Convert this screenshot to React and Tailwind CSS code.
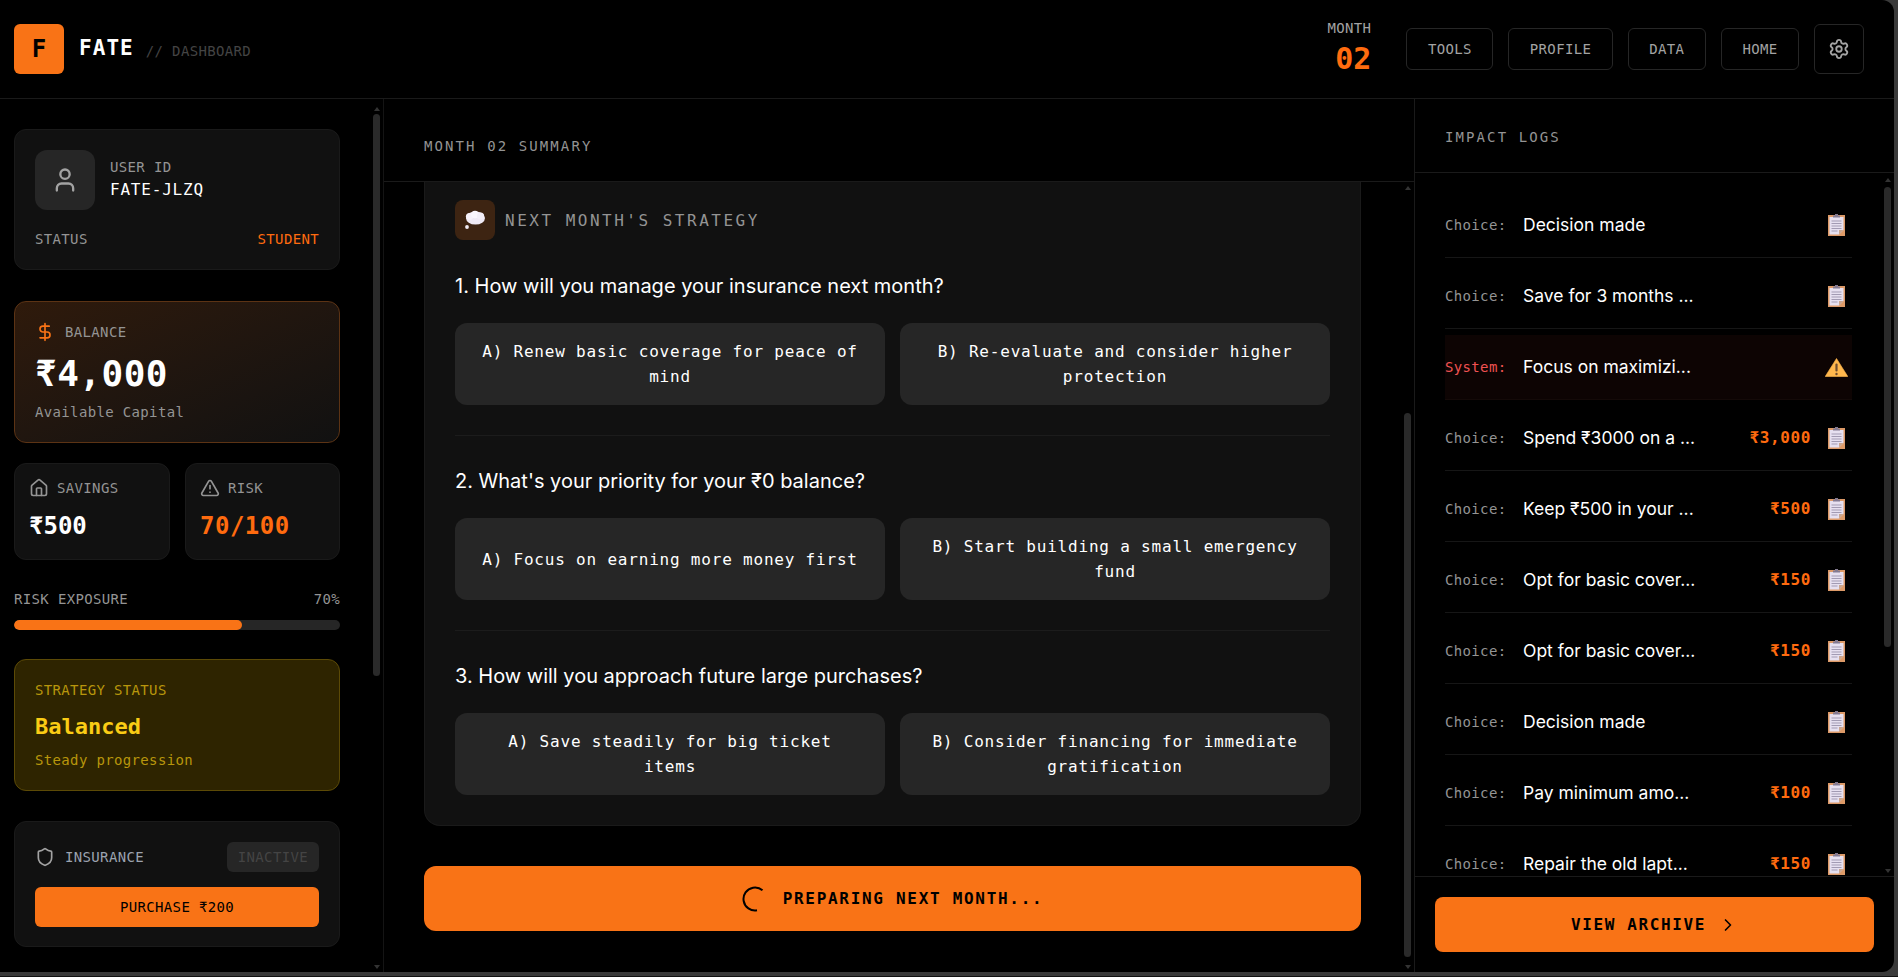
import React from "react";
import { User, DollarSign, House, TriangleAlert, Shield, Settings, ChevronRight } from "lucide-react";

function Clipboard() {
  return (
    <svg width="17" height="22" viewBox="0 0 17 22" className="shrink-0">
      <rect x="0" y="1" width="17" height="21" fill="#dd9a68" />
      <path d="M1.5 3H15.5V16L11 20.5H1.5Z" fill="#e6e0f0" />
      <path d="M11 20.5L15.5 16H11Z" fill="#c9a58e" />
      <path d="M5 3V1.5H7V0H10V1.5H12V3.5H5Z" fill="#837a91" />
      <path d="M3.5 7H13.5M3.5 9.5H13.5M3.5 12H13.5M3.5 14.5H13.5M3.5 17H9.5" stroke="#a29bb3" strokeWidth="1" />
    </svg>
  );
}

function WarningEmoji() {
  return (
    <svg width="23" height="19" viewBox="0 0 23 19" className="shrink-0">
      <path d="M11.5 0.5L22.8 18.5H0.2Z" fill="#ffb74d" stroke="#ffb74d" strokeWidth="0.6" strokeLinejoin="round" />
      <rect x="10.4" y="5.5" width="2.2" height="8" rx="1" fill="#6d4c2f" />
      <circle cx="11.5" cy="16" r="1.2" fill="#6d4c2f" />
    </svg>
  );
}

function Balloon() {
  return (
    <svg width="22" height="20" viewBox="0 0 22 20">
      <ellipse cx="11.5" cy="8" rx="9.5" ry="6.6" fill="#efe9f4" />
      <circle cx="5.5" cy="6.5" r="3.6" fill="#f6f1f9" />
      <circle cx="11" cy="4.5" r="3.8" fill="#faf6fc" />
      <circle cx="16.5" cy="6" r="3.6" fill="#f3eef7" />
      <circle cx="3" cy="17" r="1.9" fill="#f0ebf4" />
    </svg>
  );
}

function Scrollbar({ x, top, bottom, thumbTop, thumbBottom }) {
  return (
    <div className="absolute w-[8px] pointer-events-none" style={{ left: x, top, height: bottom - top }}>
      <div className="absolute left-[1px] top-[3px] w-0 h-0 border-l-[3px] border-r-[3px] border-b-[4px] border-l-transparent border-r-transparent border-b-[#333333]" />
      <div className="absolute left-0 w-[7px] rounded-full bg-[#2a2a2a]" style={{ top: thumbTop - top, height: thumbBottom - thumbTop }} />
      <div className="absolute left-[1px] bottom-[3px] w-0 h-0 border-l-[3px] border-r-[3px] border-t-[4px] border-l-transparent border-r-transparent border-t-[#333333]" />
    </div>
  );
}

const logs = [
  { t: "Decision made" },
  { t: "Save for 3 months ..." },
  { t: "Focus on maximizi...", sys: true },
  { t: "Spend ₹3000 on a ...", a: "₹3,000" },
  { t: "Keep ₹500 in your ...", a: "₹500" },
  { t: "Opt for basic cover...", a: "₹150" },
  { t: "Opt for basic cover...", a: "₹150" },
  { t: "Decision made" },
  { t: "Pay minimum amo...", a: "₹100" },
  { t: "Repair the old lapt...", a: "₹150" },
];

const questions = [
  ["1. How will you manage your insurance next month?", "A) Renew basic coverage for peace of mind", "B) Re-evaluate and consider higher protection"],
  ["2. What's your priority for your ₹0 balance?", "A) Focus on earning more money first", "B) Start building a small emergency fund"],
  ["3. How will you approach future large purchases?", "A) Save steadily for big ticket items", "B) Consider financing for immediate gratification"],
];

function NavButton({ children }) {
  return (
    <button className="h-[42px] px-[20.5px] rounded-md border border-[#262626] text-sm tracking-wide text-[#a3a3a3]">
      {children}
    </button>
  );
}

export default function App() {
  return (
    <div className="relative w-[1898px] h-[977px] bg-[#3a3a3a] overflow-hidden font-['DejaVu_Sans_Mono',monospace] text-white">
      <div className="absolute left-0 right-0 bottom-0 h-[1px] bg-[#111111]" />
      <div className="relative w-[1894px] h-[972px] bg-black rounded-r-xl overflow-hidden flex flex-col">
        <header className="h-[99px] shrink-0 border-b border-[#1a1a1a] flex items-center justify-between pl-[14px] pr-[30px]">
          <div className="flex items-center">
            <div className="w-[50px] h-[50px] rounded-md bg-[#f97316] flex items-center justify-center text-black font-bold text-2xl">F</div>
            <span className="ml-[15px] text-[21px] font-bold tracking-wider">FATE</span>
            <span className="ml-[12px] mt-[3px] text-sm tracking-wide text-[#444444]">// DASHBOARD</span>
          </div>
          <div className="flex items-center">
            <div className="flex flex-col items-end mr-[35px] mb-[4px]">
              <span className="text-sm tracking-wide text-[#a3a3a3] leading-5 -mb-[1px]">MONTH</span>
              <span className="text-3xl font-bold text-[#ff6b0f] leading-9 mt-[4px]">02</span>
            </div>
            <div className="flex items-center gap-[15px]">
              <NavButton>TOOLS</NavButton>
              <NavButton>PROFILE</NavButton>
              <NavButton>DATA</NavButton>
              <NavButton>HOME</NavButton>
              <button className="w-[50px] h-[50px] rounded-md border border-[#262626] flex items-center justify-center text-[#a3a3a3]">
                <Settings size={22} />
              </button>
            </div>
          </div>
        </header>

        <div className="flex-1 flex min-h-0">
          <aside className="w-[384px] shrink-0 border-r border-[#141414] pt-[30px] pl-[14px] pr-[43px] flex flex-col">
            <div className="h-[141px] shrink-0 rounded-xl bg-[#111111] border border-[#1a1a1a] p-5">
              <div className="flex items-center gap-[15px]">
                <div className="w-[60px] h-[60px] rounded-xl bg-[#262626] flex items-center justify-center text-[#a3a3a3]">
                  <User size={28} />
                </div>
                <div>
                  <div className="text-sm tracking-wide text-[#949494] leading-5 -mt-[1px]">USER ID</div>
                  <div className="text-base tracking-wider leading-6 mt-[1px]">FATE-JLZQ</div>
                </div>
              </div>
              <div className="mt-[19px] flex justify-between text-sm tracking-wide leading-5">
                <span className="text-[#949494]">STATUS</span>
                <span className="text-[#ff6b0f]">STUDENT</span>
              </div>
            </div>

            <div className="mt-[31px] h-[142px] shrink-0 rounded-xl border border-[#5c3314] bg-gradient-to-br from-[#2f1a0b] to-[#111111] p-5">
              <div className="flex items-center gap-[10px] h-5">
                <DollarSign size={20} className="text-[#f97316]" />
                <span className="text-sm tracking-wide text-[#949494]">BALANCE</span>
              </div>
              <div className="mt-[12px] text-4xl leading-10 font-bold tracking-[0.5px]">₹4,000</div>
              <div className="mt-[8px] text-sm tracking-wide leading-5 text-[#949494]">Available Capital</div>
            </div>

            <div className="mt-[20px] flex gap-[15px] shrink-0">
              <div className="w-[156px] h-[97px] rounded-xl bg-[#111111] border border-[#1a1a1a] p-[14px]">
                <div className="flex items-center gap-2 h-5">
                  <House size={20} className="text-[#949494]" />
                  <span className="text-sm tracking-wide text-[#949494]">SAVINGS</span>
                </div>
                <div className="mt-[12px] text-2xl leading-8 font-bold">₹500</div>
              </div>
              <div className="flex-1 h-[97px] rounded-xl bg-[#111111] border border-[#1a1a1a] p-[14px]">
                <div className="flex items-center gap-2 h-5">
                  <TriangleAlert size={20} className="text-[#949494]" />
                  <span className="text-sm tracking-wide text-[#949494]">RISK</span>
                </div>
                <div className="mt-[12px] text-2xl leading-8 font-bold tracking-[0.5px] text-[#ff6b0f]">70/100</div>
              </div>
            </div>

            <div className="mt-[29px] flex justify-between text-sm tracking-wide leading-5 text-[#949494] shrink-0">
              <span>RISK EXPOSURE</span>
              <span>70%</span>
            </div>
            <div className="mt-[11px] h-[10px] rounded-full bg-[#262626] shrink-0 overflow-hidden">
              <div className="h-full w-[70%] rounded-full bg-[#f97316]" />
            </div>

            <div className="mt-[29px] h-[132px] shrink-0 rounded-xl bg-[#2e2400] border border-[#5c4a06] p-5">
              <div className="text-sm tracking-wide leading-5 text-[#b8960c]">STRATEGY STATUS</div>
              <div className="mt-[12px] text-[22px] leading-[30px] font-bold text-[#facc15]">Balanced</div>
              <div className="mt-[8px] text-sm tracking-wide leading-5 text-[#b8960c]">Steady progression</div>
            </div>

            <div className="mt-[30px] h-[126px] shrink-0 rounded-xl bg-[#111111] border border-[#1a1a1a] p-5">
              <div className="flex items-center justify-between h-[30px]">
                <div className="flex items-center gap-[10px]">
                  <Shield size={20} className="text-[#a3a3a3]" />
                  <span className="text-sm tracking-wide text-[#9ca3af]">INSURANCE</span>
                </div>
                <span className="h-[30px] px-[11px] rounded-md bg-[#262626] text-sm tracking-wide text-[#444444] flex items-center">INACTIVE</span>
              </div>
              <button className="mt-[15px] w-full h-[40px] rounded-md bg-[#f97316] text-black text-sm tracking-wide">PURCHASE ₹200</button>
            </div>
          </aside>

          <main className="flex-1 min-w-0 flex flex-col">
            <div className="h-[83px] shrink-0 border-b border-[#1a1a1a] px-10 pt-[37px]">
              <span className="block text-sm leading-5 tracking-[2.1px] text-[#949494]">MONTH 02 SUMMARY</span>
            </div>
            <div className="flex-1 pl-10 pr-[53px] pb-[40px] flex flex-col">
              <div className="rounded-b-2xl bg-[#111111] border-x border-b border-[#1a1a1a] px-[30px] pt-[18px] pb-[30px]">
                <div className="flex items-center gap-[10px]">
                  <div className="w-10 h-10 rounded-lg bg-[#3d2412] flex items-center justify-center"><Balloon /></div>
                  <span className="text-base tracking-[2.5px] text-[#949494] mt-[2px]">NEXT MONTH'S STRATEGY</span>
                </div>
                <div className="mt-[31px]">
                  {questions.map((q, i) => (
                    <div key={i} className={i < 2 ? "pb-[30px] mb-[30px] border-b border-[#1c1c1c]" : ""}>
                      <div className="text-xl leading-[30px] font-['Inter',sans-serif]">{q[0]}</div>
                      <div className="mt-[22px] grid grid-cols-2 gap-[15px]">
                        {q.slice(1).map((o) => (
                          <div key={o} className="h-[82px] rounded-xl bg-[#262626] px-6 flex items-center justify-center text-center text-base tracking-wider leading-[25px]">{o}</div>
                        ))}
                      </div>
                    </div>
                  ))}
                </div>
              </div>
              <button className="mt-[40px] h-[65px] rounded-xl bg-[#f97316] text-black flex items-center justify-center gap-[15px] text-base font-bold tracking-[1.7px] shrink-0">
                <svg width="26" height="26" viewBox="0 0 26 26" fill="none">
                  <circle cx="13" cy="13" r="11.5" stroke="#000" strokeWidth="2" strokeDasharray="46 26" transform="rotate(80 13 13)" />
                </svg>
                PREPARING NEXT MONTH...
              </button>
            </div>
          </main>

          <section className="w-[480px] shrink-0 border-l border-[#1a1a1a] flex flex-col min-h-0">
            <div className="h-[74px] shrink-0 border-b border-[#1a1a1a] pl-[30px] pt-[28px]">
              <span className="block text-sm leading-5 tracking-[2.1px] text-[#949494]">IMPACT LOGS</span>
            </div>
            <div className="flex-1 min-h-0 overflow-hidden pt-[20px] pl-[30px] pr-[42px] flex flex-col gap-[6px]">
              {logs.map((l, i) => (
                <div key={i} className={"h-[65px] shrink-0 flex items-center border-b pr-[7px] " + (l.sys ? "bg-[#0d0403] border-[#140a08]" : "border-[#161616]")}>
                  <span className={"w-[78px] shrink-0 text-sm tracking-wide " + (l.sys ? "text-[#f05252]" : "text-[#949494]")}>{l.sys ? "System:" : "Choice:"}</span>
                  <span className="w-[175px] shrink-0 whitespace-nowrap text-[17.5px] font-['Inter',sans-serif]">{l.t}</span>
                  {l.a && <span className="ml-auto mr-[17px] text-base font-bold tracking-[0.6px] text-[#ff6b0f]">{l.a}</span>}
                  <span className={l.a ? "" : "ml-auto"}>
                    {l.sys ? <span className="block -mr-[3px]"><WarningEmoji /></span> : <Clipboard />}
                  </span>
                </div>
              ))}
            </div>
            <div className="h-[96px] shrink-0 border-t border-[#1a1a1a] px-5 pt-[20px]">
              <button className="w-[439px] h-[55px] rounded-lg bg-[#f97316] text-black text-base font-bold tracking-[1.6px] flex items-center justify-center gap-3">
                VIEW ARCHIVE
                <ChevronRight size={20} />
              </button>
            </div>
          </section>
        </div>

        <Scrollbar x={373} top={104} bottom={972} thumbTop={114} thumbBottom={676} />
        <Scrollbar x={1404} top={183} bottom={972} thumbTop={413} thumbBottom={957} />
        <Scrollbar x={1884} top={175} bottom={876} thumbTop={187} thumbBottom={647} />
      </div>
    </div>
  );
}
